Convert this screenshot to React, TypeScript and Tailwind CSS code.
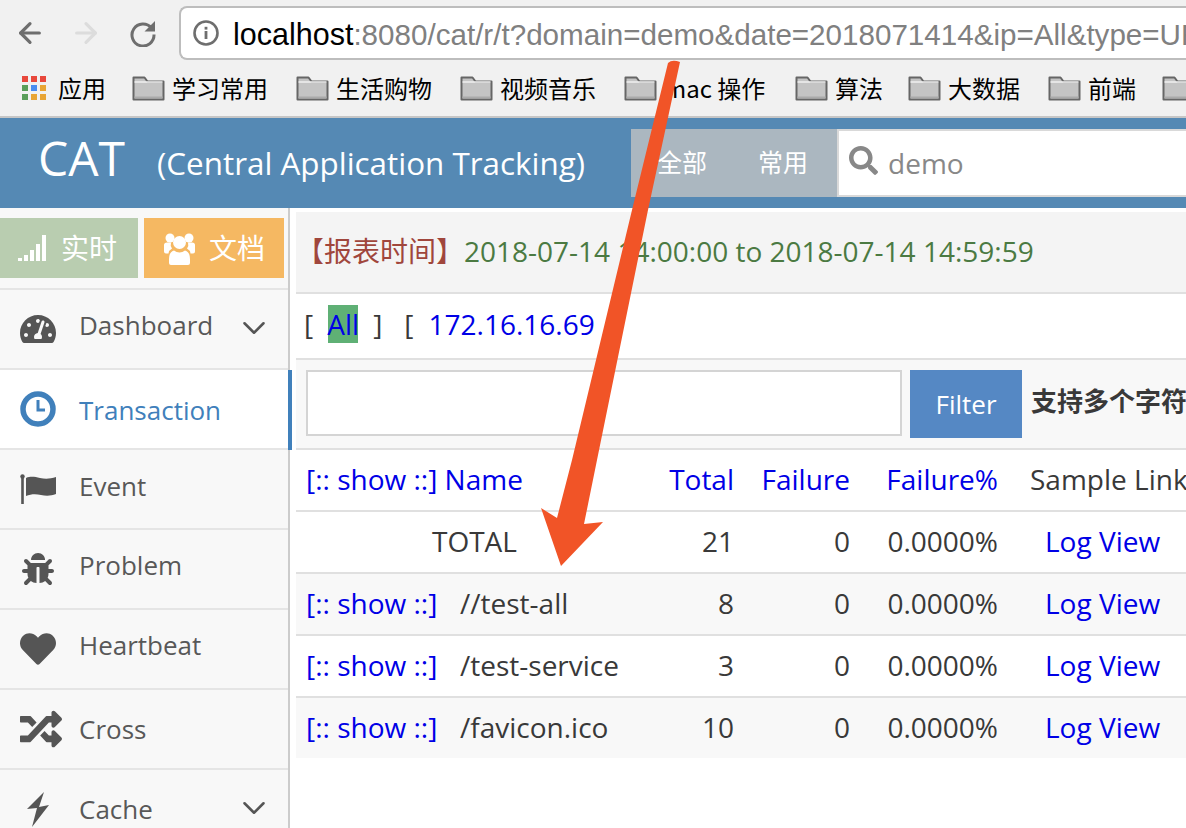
import React from "react";
import { ArrowLeft, ArrowRight, ChevronDown } from "lucide-react";
import { FaBug, FaHeart, FaRandom, FaSearch, FaTachometerAlt } from "react-icons/fa";

const bookmarks = [
  { label: "学习常用", w: "w-[98px]" },
  { label: "生活购物", w: "w-[98px]" },
  { label: "视频音乐", w: "w-[98px]" },
  { label: "mac 操作", w: "w-[105px]" },
  { label: "算法", w: "w-[47px]" },
  { label: "大数据", w: "w-[74px]" },
  { label: "前端", w: "w-[48px]" },
  { label: "", w: "w-[48px]" },
];

const rows = [
  { name: "//test-all", total: "8", cls: "h-[62px] bg-[#f8f8f8] border-b-2 border-[#e0e0e0]" },
  { name: "/test-service", total: "3", cls: "h-[62px] bg-white border-b-2 border-[#e0e0e0]" },
  { name: "/favicon.ico", total: "10", cls: "h-[60px] bg-[#f8f8f8]" },
];

function FolderIcon() {
  return (
    <svg width="33" height="26" viewBox="0 0 33 26" className="shrink-0">
      <path d="M1.5 24.5V2.5h11l3 4h16v18z" fill="#c4c4c4" stroke="#666" strokeWidth="2" strokeLinejoin="round" />
      <path d="M2.5 7h28" stroke="#f0f0f0" strokeWidth="1.5" />
      <path d="M2.5 21.5h28v2h-28z" fill="#aaa" />
    </svg>
  );
}

function AppsIcon() {
  const colors = ["#e8483c", "#e8483c", "#e8483c", "#5a9e5a", "#4a8df0", "#e8a535", "#5a9e5a", "#e8a535", "#e8a535"];
  return (
    <div className="grid grid-cols-[6px_6px_6px] gap-[3px] shrink-0">
      {colors.map((c, i) => (
        <svg key={i} width="6" height="6"><rect width="6" height="6" fill={c} /></svg>
      ))}
    </div>
  );
}

function ReloadIcon() {
  return (
    <svg width="28" height="28" viewBox="0 0 28 28">
      <path d="M22.5 9A11 11 0 1 0 25 15.5" fill="none" stroke="#6e6e6e" strokeWidth="3" />
      <path d="M26 2v10.5H15.5z" fill="#6e6e6e" />
    </svg>
  );
}

function InfoIcon() {
  return (
    <svg width="26" height="26" viewBox="0 0 26 26" className="shrink-0">
      <circle cx="13" cy="13" r="11.5" fill="none" stroke="#6e6e6e" strokeWidth="2.6" />
      <rect x="11.6" y="11" width="2.8" height="8" fill="#6e6e6e" />
      <rect x="11.6" y="6.8" width="2.8" height="2.8" fill="#6e6e6e" />
    </svg>
  );
}

function SignalIcon() {
  return (
    <svg width="28" height="26" viewBox="0 0 28 26" fill="#fff">
      <rect x="0" y="23" width="4" height="3" />
      <rect x="6" y="20" width="4" height="6" />
      <rect x="12" y="15" width="4" height="11" />
      <rect x="18" y="9" width="4" height="17" />
      <rect x="24" y="0" width="4" height="26" />
    </svg>
  );
}

function UsersIcon() {
  return (
    <svg width="31" height="33" viewBox="0 0 31 33" fill="#fff">
      <circle cx="6" cy="6" r="4.5" />
      <circle cx="25" cy="6" r="4.5" />
      <path d="M0 13q0-2.500 3-2.500h4q-1 3 1 6-3 1.500-3.500 5H2q-2 0-2-2z" />
      <path d="M31 13q0-2.500-3-2.500h-4q1 3-1 6 3 1.500 3.500 5H29q2 0 2-2z" />
      <circle cx="15.500" cy="10.500" r="6.500" />
      <path d="M7 33q-2 0-2-2v-4q0-7 5-8.500 2.500 2 5.500 2t5.500-2q5 1.500 5 8.500v4q0 2-2 2z" />
    </svg>
  );
}

function ClockIcon() {
  return (
    <svg width="36" height="36" viewBox="0 0 36 36">
      <circle cx="18" cy="18" r="15" fill="none" stroke="#4080bb" strokeWidth="5.5" />
      <path d="M18 9v10h7" fill="none" stroke="#4080bb" strokeWidth="3" />
    </svg>
  );
}

function FlagIcon() {
  return (
    <svg width="36" height="30" viewBox="0 0 36 30" fill="#555">
      <circle cx="2.5" cy="2.5" r="2.2" />
      <rect x="1.2" y="3" width="2.6" height="27" />
      <path d="M6 4c5-2 9-1 14 0s10 1 16-1v17c-5 2-10 2-15 1s-10-1-15 1z" />
    </svg>
  );
}

function BoltIcon() {
  return (
    <svg width="24" height="35" viewBox="0 0 24 35" fill="#555" className="ml-[6px]">
      <path d="M18 0L1 17l10-1L6 35l17-22-10 2z" />
    </svg>
  );
}

function SideItem({ icon, label, nudge, active, chevron }: { icon: React.ReactNode; label: string; nudge: string; active?: boolean; chevron?: boolean }) {
  return (
    <div className={`relative h-[80px] border-b-2 border-[#e5e5e5] flex items-center ${active ? "bg-white" : "bg-[#f8f8f8]"}`}>
      <div className="w-[79px] pl-[20px] flex items-center shrink-0">{icon}</div>
      <span className={`text-[26px] leading-none ${nudge} ${active ? "text-[#4080bb]" : "text-[#585858]"}`}>{label}</span>
      {chevron && <ChevronDown className="absolute right-[15px] top-[19px] text-[#555]" size={38} strokeWidth={1.6} />}
      {active && <div className="absolute right-[-4px] top-0 bottom-[-2px] w-[4px] bg-[#4080bb]" />}
    </div>
  );
}

export default function App() {
  const cols = "grid grid-cols-[328px_116px_116px_148px_1fr] items-center pb-[2px]";
  return (
    <div className="relative w-[1186px] h-[828px] overflow-hidden bg-white font-['Open_Sans','Noto_Sans_CJK_SC',sans-serif]">
      {/* browser toolbar */}
      <div className="h-[118px] bg-[#f1f1f1] border-b-2 border-[#c6c6c6] overflow-hidden">
        <div className="h-[62px] flex items-center pt-[4px] pl-[14px]">
          <ArrowLeft size={32} className="text-[#6e6e6e]" strokeWidth={2.4} />
          <ArrowRight size={32} className="text-[#dcdcdc] ml-[24px]" strokeWidth={2.4} />
          <div className="ml-[27px]"><ReloadIcon /></div>
          <div className="ml-[22px] h-[54px] flex-1 min-w-0 bg-white border-2 border-r-0 border-[#bdbdbd] rounded-l-[8px] flex items-center pl-[12px] overflow-hidden">
            <InfoIcon />
            <span className="ml-[14px] mt-[3px] whitespace-nowrap text-[29.6px] font-['Liberation_Sans',sans-serif] text-[#808080]">
              <span className="text-black text-[30.5px]">localhost</span>:8080/cat/r/t?domain=demo&amp;date=2018071414&amp;ip=All&amp;type=URL
            </span>
          </div>
        </div>
        <div className="h-[52px] flex items-center pl-[22px] whitespace-nowrap text-[24px] text-black font-['Noto_Sans_CJK_SC','Liberation_Sans',sans-serif]">
          <AppsIcon />
          <span className="ml-[12px] w-[48px]">应用</span>
          {bookmarks.map((b) => (
            <div key={b.label} className="flex items-center ml-[26px] gap-[7px] shrink-0">
              <FolderIcon />
              <span className={b.w}>{b.label}</span>
            </div>
          ))}
        </div>
      </div>

      {/* cat header */}
      <div className="h-[90px] bg-[#5589b4] flex items-center text-white">
        <span className="ml-[38px] text-[48px] leading-none mb-[10px]">CAT</span>
        <span className="ml-[32px] text-[31.4px] leading-none w-[474px] whitespace-nowrap">(Central Application Tracking)</span>
        <div className="h-[68px] w-[206px] bg-[#abb7c0] flex items-center text-[25px] text-white">
          <span className="ml-[26px]">全部</span>
          <span className="ml-[51px]">常用</span>
        </div>
        <div className="h-[68px] flex-1 bg-white border-l-2 border-y-2 border-[#d9d9d9] flex items-center pl-[10px] text-[#888]">
          <FaSearch size={29} className="mb-[6px]" />
          <span className="ml-[10px] text-[28px]">demo</span>
        </div>
      </div>

      <div className="flex">
        {/* sidebar */}
        <div className="w-[290px] h-[620px] shrink-0 border-r-2 border-[#cccccc] bg-[#f8f8f8]">
          <div className="h-[82px] border-b-2 border-[#e5e5e5] flex items-start gap-[6px] pt-[10px] text-white text-[28px]">
            <div className="w-[138px] h-[60px] bg-[#b9cdb0] flex items-center pl-[18px] gap-[15px]">
              <SignalIcon /><span>实时</span>
            </div>
            <div className="w-[140px] h-[60px] bg-[#f5b862] flex items-center pl-[20px] gap-[14px]">
              <UsersIcon /><span>文档</span>
            </div>
          </div>
          <SideItem icon={<FaTachometerAlt size={36} className="text-[#555]" />} label="Dashboard" nudge="mb-[8px]" chevron />
          <SideItem icon={<ClockIcon />} label="Transaction" nudge="mb-[-2px]" active />
          <SideItem icon={<FlagIcon />} label="Event" nudge="mb-[6px]" />
          <SideItem icon={<FaBug size={32} className="text-[#555] ml-[2px]" />} label="Problem" nudge="mb-[8px]" />
          <SideItem icon={<FaHeart size={36} className="text-[#555]" />} label="Heartbeat" nudge="mb-[8px]" />
          <SideItem icon={<FaRandom size={42} className="text-[#555]" />} label="Cross" nudge="mb-0" />
          <SideItem icon={<BoltIcon />} label="Cache" nudge="mb-0" chevron />
        </div>

        {/* main */}
        <div className="flex-1 min-w-0 overflow-hidden ml-[6px] pt-[4px] text-[28px] text-[#393939] whitespace-nowrap">
          <div className="h-[82px] bg-[#f4f4f4] border-b-2 border-[#e0e0e0] flex items-center pb-[2px]">
            <span className="text-[#a0463c]">【报表时间】</span>
            <span className="text-[#4b7a42]">2018-07-14 14:00:00 to 2018-07-14 14:59:59</span>
          </div>
          <div className="h-[66px] border-b-2 border-[#e0e0e0] flex items-center pl-[8px] pb-[4px]">
            <span>[</span>
            <span className="ml-[15px] h-[38px] w-[30px] bg-[#5fb075] text-[#0000e6] flex items-center justify-center">All</span>
            <span className="ml-[15px]">]</span>
            <span className="ml-[22px]">[</span>
            <span className="ml-[15px] text-[#0000e6]">172.16.16.69</span>
          </div>
          <div className="h-[90px] bg-[#f8f8f8] border-b-2 border-[#e0e0e0] flex items-start pt-[10px] pl-[10px]">
            <input className="w-[596px] h-[66px] mr-[8px] shrink-0 bg-white border-2 border-[#d4d4d4] outline-none" />
            <button className="w-[112px] h-[68px] shrink-0 bg-[#5588c4] text-white text-[26px]">Filter</button>
            <span className="ml-[9px] mt-[12px] text-[26px] font-bold text-[#393939]">支持多个字符串查询</span>
          </div>

          <div className={`h-[62px] border-b-2 border-[#e0e0e0] text-[#0000e6] ${cols}`}>
            <span className="pl-[10px]">[:: show ::] Name</span>
            <span className="text-right pr-[6px]">Total</span>
            <span className="text-right pr-[6px]">Failure</span>
            <span className="text-right pr-[6px]">Failure%</span>
            <span className="pl-[26px] text-[#393939]">Sample Link</span>
          </div>
          <div className={`h-[62px] border-b-2 border-[#e0e0e0] ${cols}`}>
            <span className="pl-[136px]">TOTAL</span>
            <span className="text-right pr-[6px]">21</span>
            <span className="text-right pr-[6px]">0</span>
            <span className="text-right pr-[6px]">0.0000%</span>
            <span className="pl-[41px] text-[#0000e6]">Log View</span>
          </div>
          {rows.map((r) => (
            <div key={r.name} className={`${r.cls} ${cols}`}>
              <span className="pl-[10px]">
                <span className="inline-block w-[154px] text-[#0000e6]">[:: show ::]</span>
                {r.name}
              </span>
              <span className="text-right pr-[6px]">{r.total}</span>
              <span className="text-right pr-[6px]">0</span>
              <span className="text-right pr-[6px]">0.0000%</span>
              <span className="pl-[41px] text-[#0000e6]">Log View</span>
            </div>
          ))}
        </div>
      </div>

      {/* red annotation arrow */}
      <svg className="absolute inset-0 pointer-events-none" width="1186" height="828" viewBox="0 0 1186 828">
        <path
          d="M668 63Q672 59 680 62L648 210L597 460L584 524L603 522L561 566L541 508L557 518L572 460L632 210Z"
          fill="#f15427"
        />
      </svg>
    </div>
  );
}
